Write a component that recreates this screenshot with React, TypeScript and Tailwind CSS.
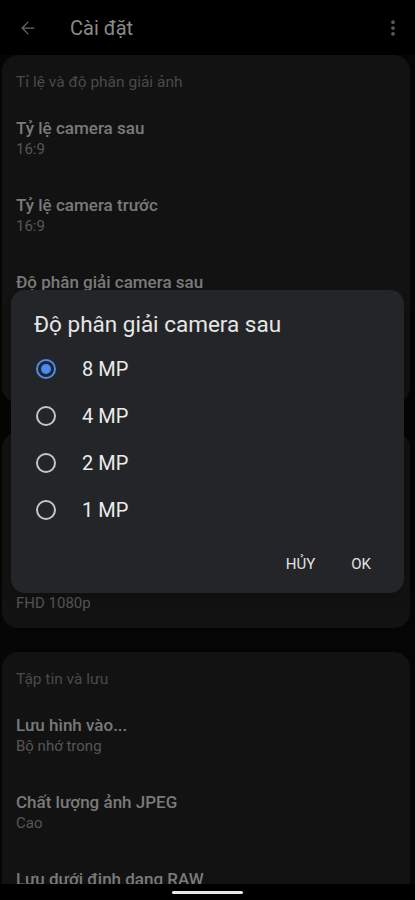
import { ArrowLeft, EllipsisVertical } from "lucide-react";

type Item = { title: string; sub?: string };

function Card({ label, items, className }: { label: string; items: Item[]; className: string }) {
    return (
        <div className={`ml-[2px] mr-[5px] rounded-[16px] bg-[#121212] px-[14px] pt-[17px] ${className}`}>
            <div className="text-[15.5px] leading-[20px] text-[#4a4a4a]">{label}</div>
            {items.map((it) => (
                <div key={it.title} className="pt-[25px] pb-[10px]">
                    <div className="text-[17px] leading-[22px] font-medium text-[#7a7a7a]">{it.title}</div>
                    {it.sub && <div className="text-[15px] leading-[20px] text-[#565656]">{it.sub}</div>}
                </div>
            ))}
        </div>
    );
}

function Radio({ checked }: { checked: boolean }) {
    return checked ? (
        <div className="flex h-[20px] w-[20px] items-center justify-center rounded-full border-2 border-[#4b8bf5]">
            <div className="h-[10px] w-[10px] rounded-full bg-[#4b8bf5]" />
        </div>
    ) : (
        <div className="h-[20px] w-[20px] rounded-full border-2 border-[#c6c6c6]" />
    );
}

export default function App() {
    const options = ["8 MP", "4 MP", "2 MP", "1 MP"];

    return (
        <div className="relative h-[900px] w-[415px] overflow-hidden bg-[#050505] font-['Roboto',sans-serif]">
            {/* header */}
            <div className="flex h-[55px] items-center bg-black pl-[18px] pr-[12px]">
                <ArrowLeft className="h-[20px] w-[20px] text-[#6a6a6a]" strokeWidth={1.5} />
                <div className="ml-[32px] text-[20px] text-[#8a8a8a]">Cài đặt</div>
                <EllipsisVertical className="ml-auto h-[20px] w-[20px] text-[#5a5a5a]" strokeWidth={2.5} />
            </div>

            <Card
                className="pb-[3px]"
                label="Tỉ lệ và độ phân giải ảnh"
                items={[
                    { title: "Tỷ lệ camera sau", sub: "16:9" },
                    { title: "Tỷ lệ camera trước", sub: "16:9" },
                    { title: "Độ phân giải camera sau", sub: "8 MP" },
                    { title: "Độ phân giải camera trước", sub: "8 MP" },
                ]}
            />
            <Card
                className="mt-[29px] pb-[5px]"
                label="Video"
                items={[
                    { title: "Độ phân giải video sau", sub: "FHD 1080p" },
                    { title: "Độ phân giải video trước", sub: "FHD 1080p" },
                ]}
            />
            <Card
                className="mt-[24px] pb-[10px]"
                label="Tập tin và lưu"
                items={[
                    { title: "Lưu hình vào...", sub: "Bộ nhớ trong" },
                    { title: "Chất lượng ảnh JPEG", sub: "Cao" },
                    { title: "Lưu dưới định dạng RAW" },
                ]}
            />

            {/* dialog */}
            <div className="absolute left-[11px] top-[290px] flex h-[303px] w-[393px] flex-col rounded-[14px] bg-[#242529] shadow-lg">
                <div className="pl-[23px] pt-[20px] text-[22.5px] leading-[28px] text-[#e6e6e6]">Độ phân giải camera sau</div>
                <div className="mt-[7px] flex flex-col">
                    {options.map((o, i) => (
                        <div key={o} className="flex h-[47px] items-center pl-[25px]">
                            <Radio checked={i === 0} />
                            <span className="ml-[26px] text-[20px] text-[#ececec]">{o}</span>
                        </div>
                    ))}
                </div>
                <div className="mt-auto flex justify-end gap-[36px] pb-[18px] pr-[33px] text-[15px] text-[#e2e2e2]">
                    <span>HỦY</span>
                    <span>OK</span>
                </div>
            </div>

            {/* nav bar */}
            <div className="absolute bottom-0 left-0 flex h-[16px] w-full items-center justify-center bg-black">
                <div className="h-[3px] w-[71px] rounded-full bg-[#e8e8e8]" />
            </div>
        </div>
    );
}
